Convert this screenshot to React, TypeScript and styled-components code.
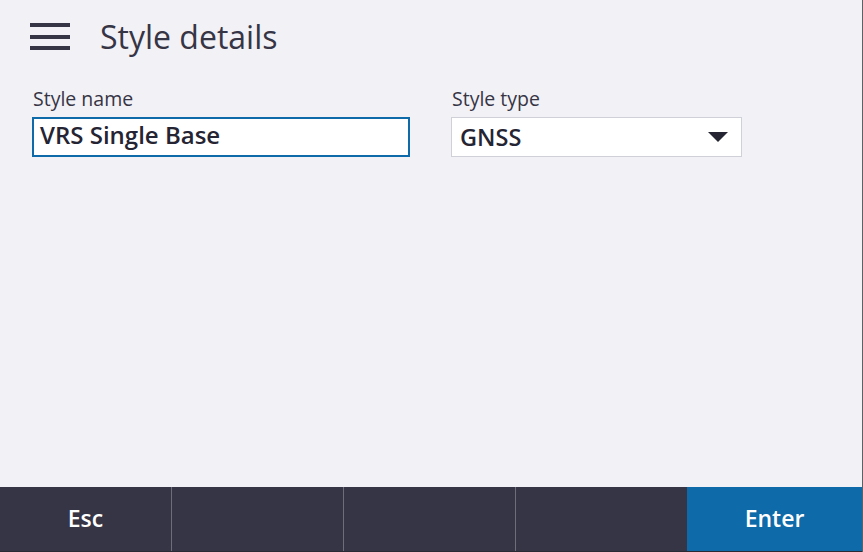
import React from 'react';
import styled, { createGlobalStyle } from 'styled-components';

const GlobalStyle = createGlobalStyle`
html, body {
    margin: 0;
    padding: 0;
    background: #f2f1f6;
}
body {
    font-family: "Open Sans", "Noto Sans", "Liberation Sans", sans-serif;
}
`;

const Screen = styled.div`
width: 862px;
height: 552px;
display: flex;
flex-direction: column;
background: #f2f1f6;
border-right: 1px solid #5f5f66;
`;

const Header = styled.div`
display: flex;
align-items: center;
height: 72px;
padding-left: 30px;
gap: 30px;
`;

const Burger = styled.div`
width: 40px;
display: flex;
flex-direction: column;
gap: 7.5px;
margin-top: 1px;
`;

const BurgerLine = styled.span`
display: block;
height: 4px;
background: #363545;
`;

const Title = styled.h1`
margin: 0;
font-size: 32px;
font-weight: 400;
color: #363545;
`;

const Body = styled.div`
flex: 1;
display: flex;
gap: 41px;
padding: 14px 0 0 32px;
align-items: flex-start;
`;

const Field = styled.div<{ width: number }>`
display: flex;
flex-direction: column;
width: ${p => p.width}px;
`;

const Label = styled.label`
font-size: 19.5px;
color: #363545;
line-height: 26px;
margin-bottom: 5px;
padding-left: 1px;
`;

const TextBox = styled.div`
box-sizing: border-box;
height: 40px;
background: #ffffff;
border: 2px solid #0e6aa8;
padding: 0 6px 5px;
display: flex;
align-items: center;
font-size: 24px;
font-weight: 600;
color: #252433;
`;

const Select = styled.div`
box-sizing: border-box;
height: 40px;
background: #ffffff;
border: 1px solid #d0d0d8;
padding: 0 13px 0 8px;
display: flex;
align-items: center;
justify-content: space-between;
font-size: 23.5px;
font-weight: 600;
color: #252433;
`;

const Arrow = styled.span`
width: 0;
height: 0;
border-left: 10px solid transparent;
border-right: 10px solid transparent;
border-top: 10px solid #252433;
`;

const Footer = styled.div`
height: 65px;
display: grid;
grid-template-columns: 172px 172px 172px 171px 1fr;
background: #363545;
border-bottom: 1px solid #2a2a35;
box-sizing: border-box;
`;

const Key = styled.div<{ primary?: boolean; divider?: boolean }>`
box-sizing: border-box;
display: flex;
align-items: center;
justify-content: center;
color: #ffffff;
font-size: 23px;
font-weight: 600;
background: ${p => (p.primary ? '#0e6aa8' : '#363545')};
border-right: ${p => (p.divider ? '1px solid #6e6d7a' : 'none')};
padding-bottom: 2px;
`;

const keys = ['Esc', '', '', '', 'Enter'];

export default function App() {
    return (
        <Screen>
            <GlobalStyle />
            <Header>
                <Burger>
                    <BurgerLine />
                    <BurgerLine />
                    <BurgerLine />
                </Burger>
                <Title>Style details</Title>
            </Header>
            <Body>
                <Field width={378}>
                    <Label>Style name</Label>
                    <TextBox>VRS Single Base</TextBox>
                </Field>
                <Field width={291}>
                    <Label>Style type</Label>
                    <Select>
                        GNSS
                        <Arrow />
                    </Select>
                </Field>
            </Body>
            <Footer>
                {keys.map((k, i) => (
                    <Key key={i} primary={k === 'Enter'} divider={i < 3}>
                        {k}
                    </Key>
                ))}
            </Footer>
        </Screen>
    );
}
